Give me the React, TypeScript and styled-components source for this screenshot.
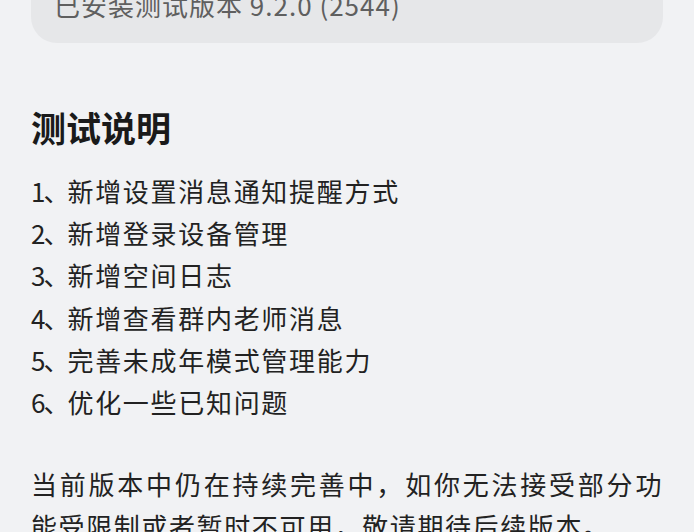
import styled, { createGlobalStyle } from "styled-components";

const GlobalStyle = createGlobalStyle`
  html, body {
    margin: 0;
    padding: 0;
    background-color: #f1f2f4;
    overflow: hidden;
  }
  body {
    font-family: "Noto Sans CJK SC", "Noto Sans", sans-serif;
  }
`

const Page = styled.div`
  padding: 0 31px;
  color: #1f1f1f;
`

const VersionCard = styled.div`
  margin-top: -38px;
  padding: 22px 23px 17px;
  border-radius: 26px;
  background-color: #e6e7e9;
`

const VersionText = styled.div`
  font-size: 26px;
  line-height: 42px;
  letter-spacing: 1px;
  color: #5f5f5f;
`

const Title = styled.h2`
  margin: 59px 0 18px;
  font-size: 35px;
  line-height: 50px;
  font-weight: 700;
  color: #1a1a1a;
`

const List = styled.ol`
  margin: 0;
  padding: 0;
  list-style: none;
`

const Item = styled.li`
  font-size: 26px;
  line-height: 42.2px;
  letter-spacing: 1.7px;
  color: #222;
`

const Num = styled.span`
  letter-spacing: -2px;
`

const Note = styled.p`
  margin: 40px 0 0;
  font-size: 26px;
  line-height: 42px;
  letter-spacing: 1.6px;
  text-align: justify;
  color: #222;
`

const notes = [
  "新增设置消息通知提醒方式",
  "新增登录设备管理",
  "新增空间日志",
  "新增查看群内老师消息",
  "完善未成年模式管理能力",
  "优化一些已知问题",
];

function App() {
  return (
    <Page>
      <GlobalStyle />
      <VersionCard>
        <VersionText>已安装测试版本 9.2.0 (2544)</VersionText>
      </VersionCard>
      <Title>测试说明</Title>
      <List>
        {notes.map((note, i) => (
          <Item key={note}>
            <Num>{i + 1}、</Num>
            {note}
          </Item>
        ))}
      </List>
      <Note>
        当前版本中仍在持续完善中，如你无法接受部分功能受限制或者暂时不可用，敬请期待后续版本。
      </Note>
    </Page>
  );
}

export default App;
